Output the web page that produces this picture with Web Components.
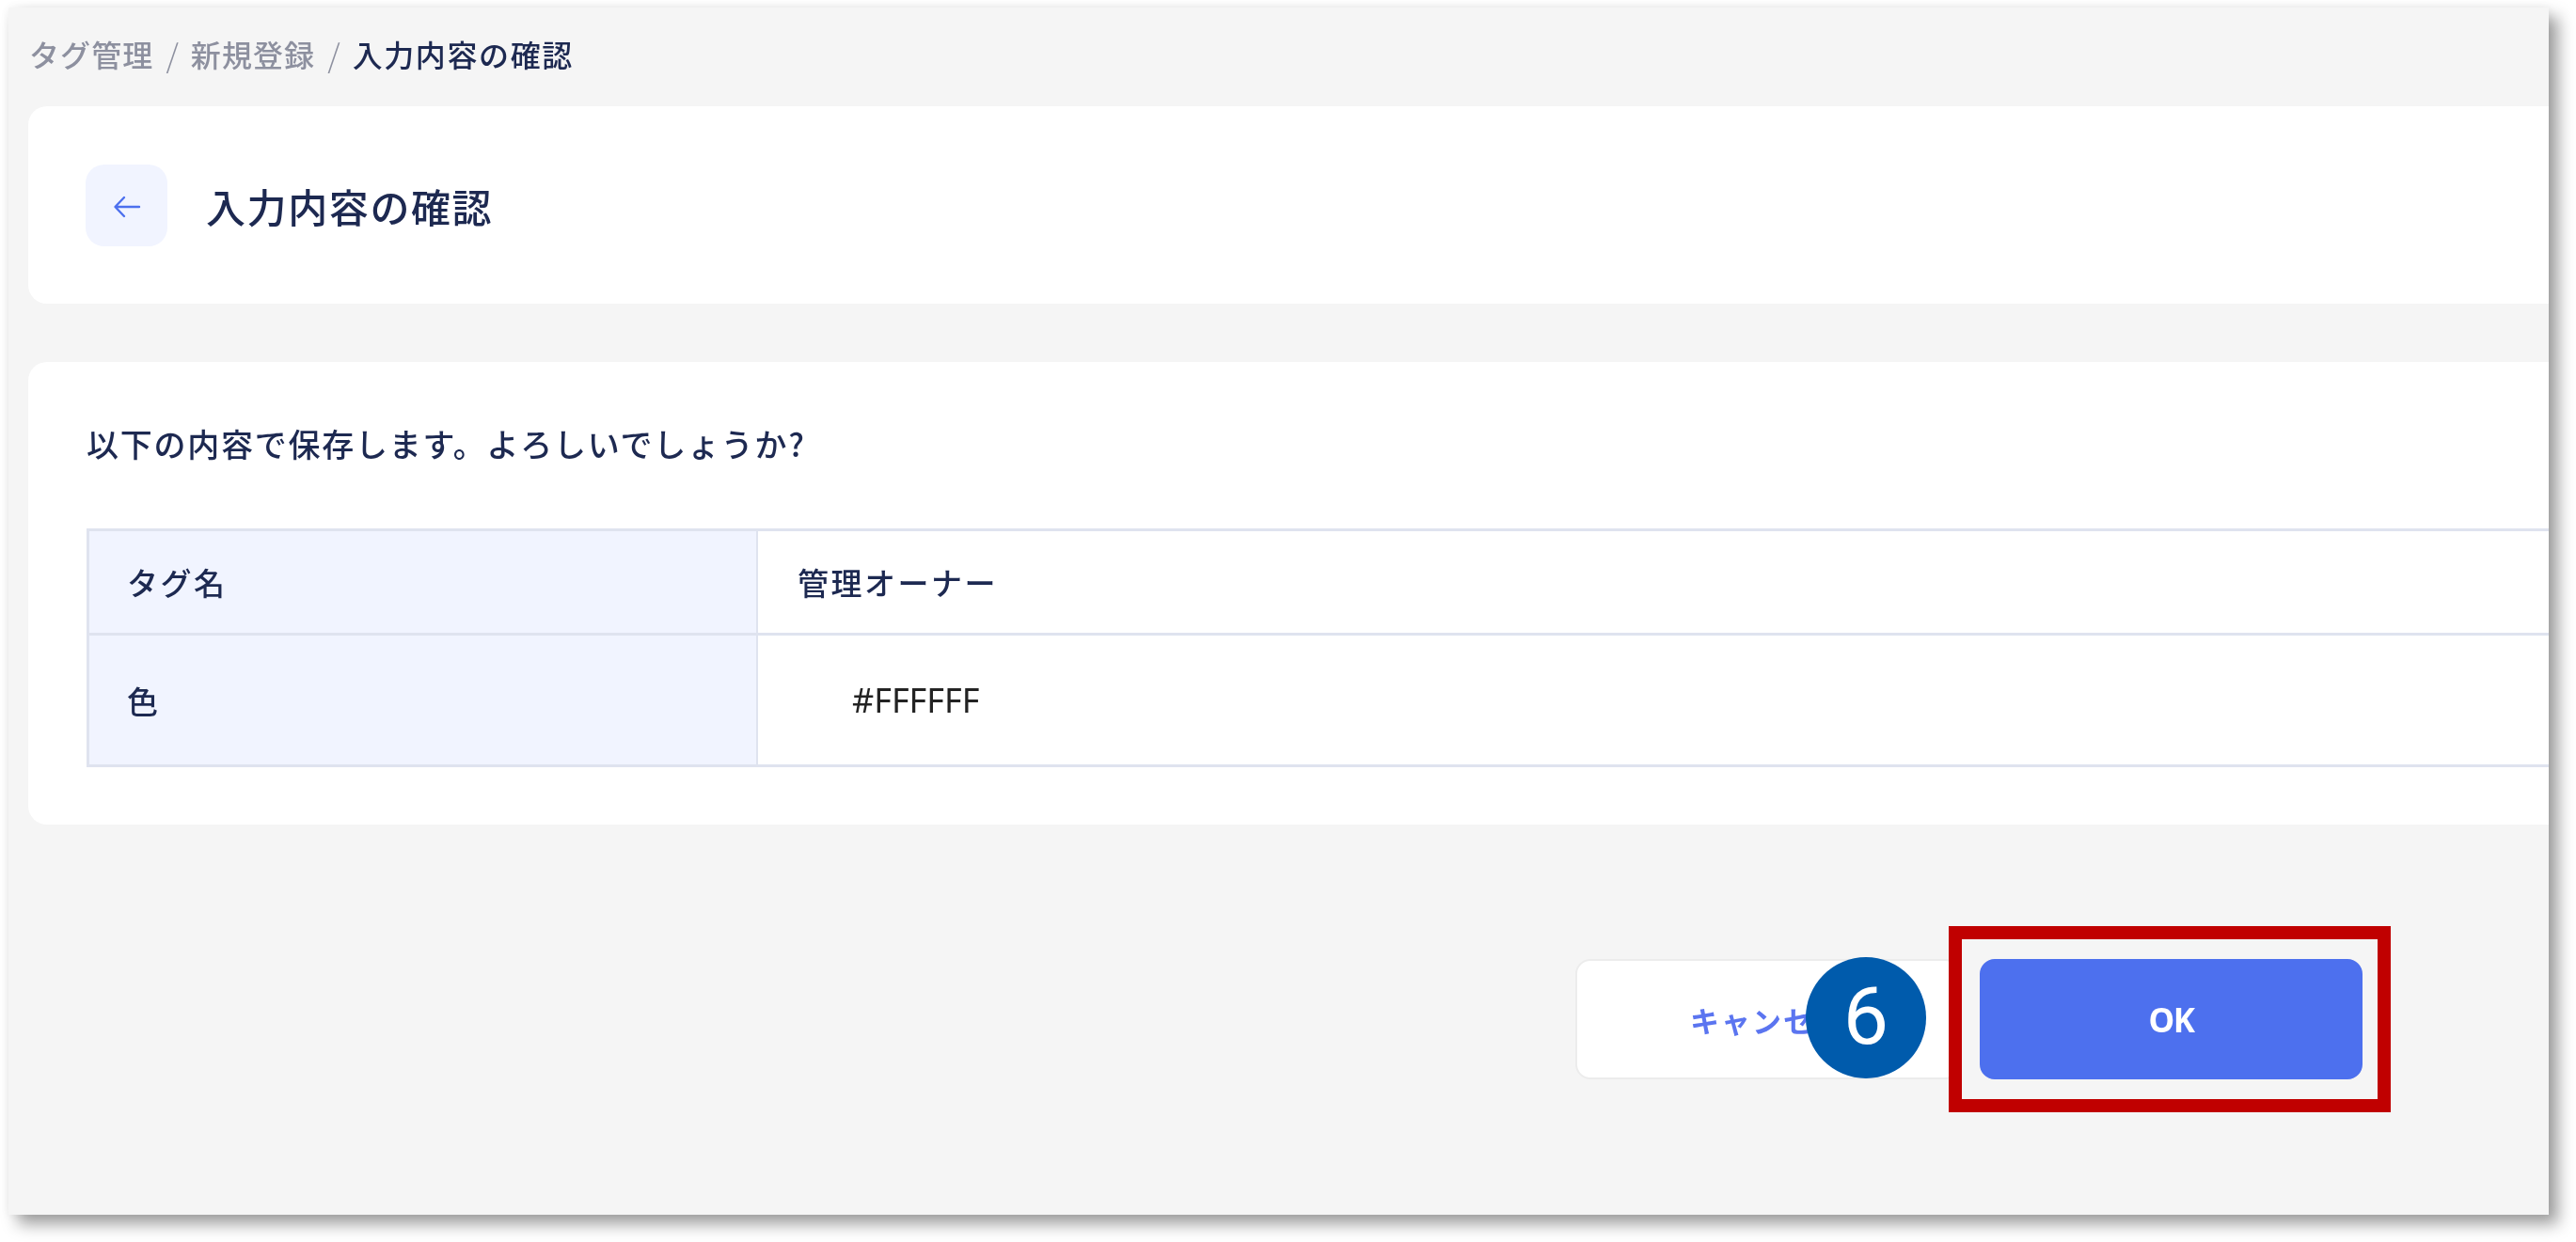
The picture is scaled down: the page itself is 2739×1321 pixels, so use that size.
<!DOCTYPE html>
<html lang="ja">
<head>
<meta charset="utf-8">
<title>入力内容の確認</title>
<style>
  html, body { margin: 0; background: #fff; }
  body {
    box-sizing: border-box;
    min-height: 1321px;
    padding: 8px 0 0 9px;
    overflow: hidden;
    font-family: "Noto Sans CJK JP", "Noto Sans", sans-serif;
    color: #1d2951;
  }
</style>
</head>
<body>
<shot-window>
  <bread-crumb>
    <span>タグ管理</span>
    <span>新規登録</span>
    <span slot="current">入力内容の確認</span>
  </bread-crumb>
  <page-header>入力内容の確認</page-header>
  <confirm-card>
    <span slot="message">以下の内容で保存します。よろしいでしょうか?</span>
    <confirm-row label="タグ名" height="111">管理オーナー</confirm-row>
    <confirm-row label="色" height="140"><color-value>#FFFFFF</color-value></confirm-row>
  </confirm-card>
  <form-actions>
    <app-button>キャンセル</app-button>
    <app-button primary>OK</app-button>
  </form-actions>
  <red-frame slot="overlay"></red-frame>
  <step-marker slot="overlay">6</step-marker>
</shot-window>

<script>
  const define = (name, css, html, setup) => {
    customElements.define(
      name,
      class extends HTMLElement {
        constructor() {
          super();
          this.attachShadow({ mode: 'open' }).innerHTML = `<style>${css}</style>${html}`;
          if (setup) setup(this);
        }
      }
    );
  };

  define('shot-window', `
    :host {
      display: block;
      position: relative;
      box-sizing: border-box;
      width: 2701px;
      height: 1284px;
      background: #f5f5f5;
      box-shadow: 10px 10px 16px rgba(0, 0, 0, 0.38), 0 0 10px rgba(0, 0, 0, 0.05);
    }
  `, `<slot></slot><slot name="overlay"></slot>`);

  define('bread-crumb', `
    :host {
      display: flex;
      align-items: center;
      height: 98px;
      margin-bottom: 7px;
      padding-left: 22px;
      font-size: 32px;
      font-weight: 500;
      letter-spacing: 1.1px;
      color: #8d909f;
      filter: blur(0.6px);
    }
    ::slotted([slot="current"]) { color: #1d2951; letter-spacing: 1.6px; }
  `, `<slot></slot><slot name="current"></slot>`, (el) => {
    const items = [...el.querySelectorAll('span')];
    items.slice(1).forEach((item) => {
      const sep = document.createElement('span');
      sep.textContent = '/';
      sep.style.cssText = 'margin:0 13px;font-size:34px;letter-spacing:0;font-weight:300;color:#8d909f';
      el.insertBefore(sep, item);
    });
  });

  define('page-header', `
    :host {
      display: flex;
      align-items: center;
      gap: 41px;
      box-sizing: border-box;
      height: 210px;
      margin-left: 21px;
      padding-left: 61px;
      background: #fff;
      border-radius: 20px 0 0 20px;
      font-size: 42px;
      font-weight: 500;
      letter-spacing: 1.6px;
      filter: blur(0.6px);
    }
    .back {
      display: flex;
      align-items: center;
      justify-content: center;
      width: 87px;
      height: 87px;
      background: #f1f4ff;
      border-radius: 20px;
    }
    svg { margin-top: 3px; }
  `, `
    <span class="back">
      <svg width="30" height="30" viewBox="0 0 30 30" fill="none" stroke="#4d70ee" stroke-width="2.4" stroke-linecap="round" stroke-linejoin="round">
        <path d="M28 15H3M12 5 2.5 15 12 25"/>
      </svg>
    </span>
    <slot></slot>
  `);

  define('confirm-card', `
    :host {
      display: block;
      box-sizing: border-box;
      height: 492px;
      margin: 62px 0 0 21px;
      padding: 63px 0 0 62px;
      background: #fff;
      border-radius: 20px 0 0 20px;
      filter: blur(0.6px);
    }
    .message {
      height: 48px;
      margin-bottom: 66px;
      font-size: 34px;
      line-height: 48px;
      font-weight: 500;
      letter-spacing: 1.75px;
    }
    .table {
      border-top: 3px solid #dfe3ef;
      border-left: 3px solid #dfe3ef;
    }
  `, `
    <div class="message"><slot name="message"></slot></div>
    <div class="table"><slot></slot></div>
  `);

  define('confirm-row', `
    :host { display: flex; box-sizing: border-box; border-bottom: 3px solid #dfe3ef; font-size: 33px; font-weight: 500; letter-spacing: 2.5px; }
    .label {
      display: flex;
      align-items: center;
      box-sizing: border-box;
      width: 711px;
      padding-left: 40px;
      background: #f1f4ff;
      border-right: 2px solid #dfe3ef;
    }
    .value { display: flex; align-items: center; flex: 1; padding-left: 42px; }
  `, `<div class="label"></div><div class="value"><slot></slot></div>`, (el) => {
    el.shadowRoot.querySelector('.label').textContent = el.getAttribute('label');
    el.style.height = el.getAttribute('height') + 'px';
  });

  define('color-value', `
    :host { display: flex; align-items: center; gap: 26px; color: #232323; font-size: 36px; font-weight: 400; letter-spacing: 0; font-family: "Noto Sans", sans-serif; }
    .swatch { width: 32px; height: 32px; background: #fff; }
  `, `<span class="swatch"></span><slot></slot>`);

  define('form-actions', `
    :host {
      display: flex;
      justify-content: flex-end;
      gap: 21px;
      margin-top: 143px;
      padding-right: 198px;
      filter: blur(0.5px);
    }
  `, `<slot></slot>`);

  define('app-button', `
    :host {
      display: flex;
      align-items: center;
      justify-content: center;
      box-sizing: border-box;
      width: 407px;
      height: 128px;
      background: #fff;
      border: 2px solid #ececec;
      border-radius: 16px;
      color: #5b75f0;
      font-size: 31px;
      font-weight: 700;
      letter-spacing: 2px;
    }
    :host([primary]) {
      background: #4d70ee;
      border-color: #4d70ee;
      color: #fff;
      font-family: "Noto Sans", sans-serif;
      font-size: 35px;
      letter-spacing: -1.5px;
    }
    :host(:not([primary])) { margin-left: -2px; width: 409px; }
  `, `<slot></slot>`);

  define('red-frame', `
    :host {
      position: absolute;
      left: 2063px;
      top: 977px;
      box-sizing: border-box;
      width: 470px;
      height: 198px;
      border: 14px solid #c00000;
    }
  `, ``);

  define('step-marker', `
    :host {
      position: absolute;
      left: 1911px;
      top: 1010px;
      display: flex;
      align-items: center;
      justify-content: center;
      box-sizing: border-box;
      width: 128px;
      height: 129px;
      padding-bottom: 3px;
      border-radius: 50%;
      background: #005bac;
      color: #fff;
      font-family: Roboto, "Noto Sans", sans-serif;
      font-size: 86px;
      line-height: 1;
    }
  `, `<slot></slot>`);
</script>
</body>
</html>
